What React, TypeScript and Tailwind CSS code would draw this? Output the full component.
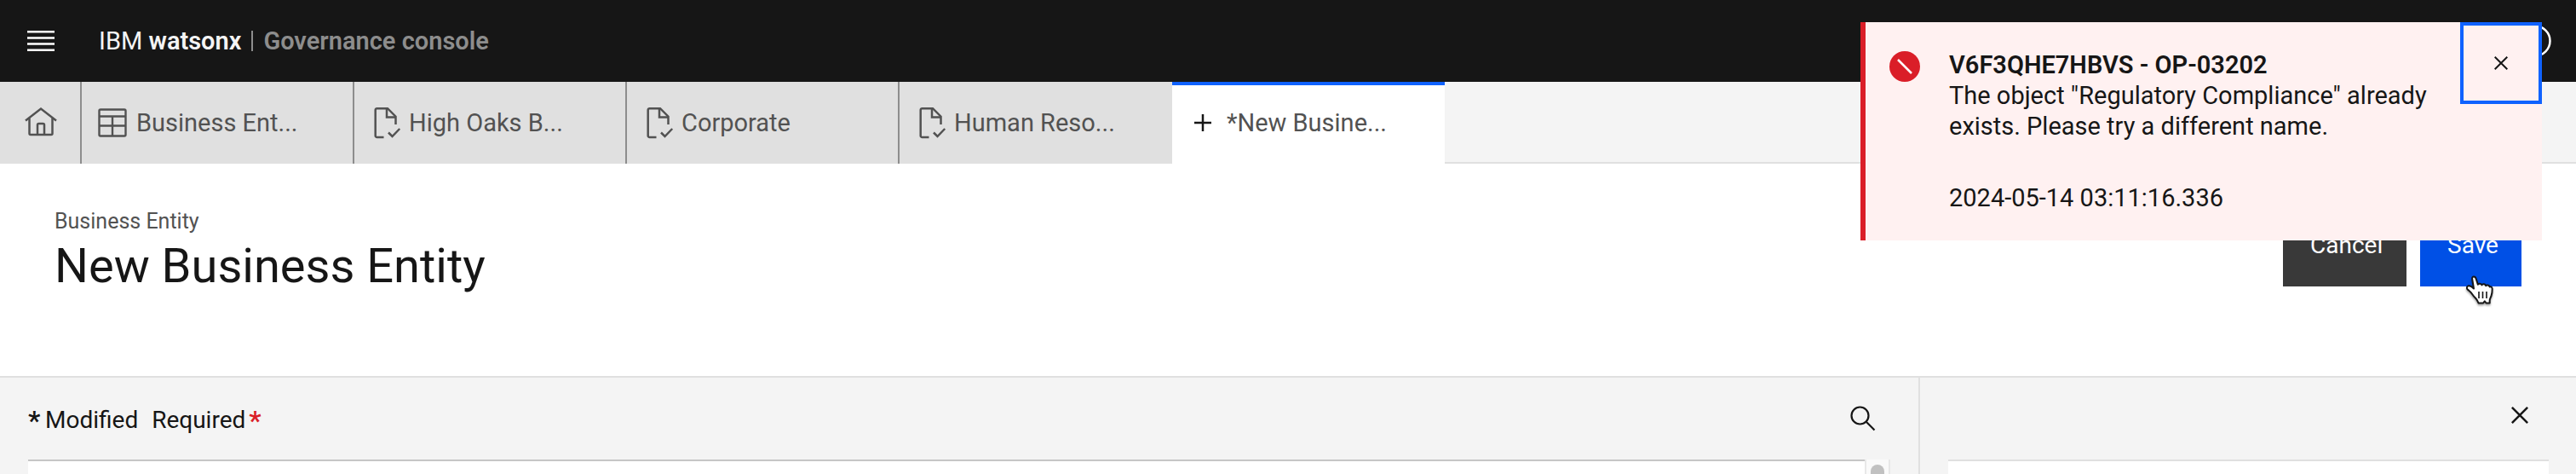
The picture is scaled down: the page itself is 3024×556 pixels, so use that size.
import type { ReactNode } from "react";

const TableIcon = () => (
  <svg viewBox="0 0 40 40" className="size-10 shrink-0" fill="none" stroke="currentColor" strokeWidth="2.4" aria-hidden="true">
    <rect x="4.5" y="4.5" width="31" height="31" rx="1.5" />
    <path d="M4.5 12.5h31M4.5 23.5h31M20 12.5v23" />
  </svg>
);

const DocumentCheckIcon = () => (
  <svg viewBox="0 0 40 40" className="size-10 shrink-0" fill="none" stroke="currentColor" strokeWidth="2.5" aria-hidden="true">
    <path d="M18.5 37H10.5a1.8 1.8 0 0 1-1.8-1.8V5a1.8 1.8 0 0 1 1.8-1.8H23l9.5 9.5V22" />
    <path d="M22 3.5V13.5H32" />
    <path d="M24 31.5l4.5 4.5 8.7-9" />
  </svg>
);

const PlusIcon = () => (
  <svg viewBox="0 0 40 40" className="size-10 shrink-0 text-[#161616]" fill="none" stroke="currentColor" strokeWidth="2.5" aria-hidden="true">
    <path d="M20 10v20M10 20h20" />
  </svg>
);

const HomeIcon = () => (
  <svg viewBox="0 0 40 40" className="size-10" fill="none" stroke="currentColor" strokeWidth="2.5" aria-hidden="true">
    <path d="M2 17.5L20 3.5l18 14" />
    <path d="M6.500 14.5V32.5a1.5 1.5 0 0 0 1.5 1.5h24a1.5 1.5 0 0 0 1.5-1.5V14.5" />
    <path d="M16 34V22.5a1.5 1.5 0 0 1 1.5-1.5h5a1.5 1.5 0 0 1 1.5 1.5V34" />
  </svg>
);

const CloseIcon = ({ className }: { className: string }) => (
  <svg viewBox="0 0 16 16" className={className} fill="none" stroke="currentColor" aria-hidden="true">
    <path d="M.7.7l14.6 14.6M15.3.7L.7 15.3" />
  </svg>
);

const PointerIcon = () => (
  <svg viewBox="0 0 34 38" className="h-[38px] w-[34px] drop-shadow-[0_2px_1px_rgba(0,0,0,0.35)]" fill="#fff" stroke="#161616" strokeWidth="2" strokeLinejoin="round" aria-hidden="true">
    <path d="M8.2 4.5c-.5-2 .6-3 1.8-3s2.200.8 2.600 2.300l2.200 7c.6-1.500 4-1.700 4.700.6.900-1.700 4.200-1.400 4.700.9 1-1.500 4-1 4.500 1.200 1.600-.6 3 .5 3 2.500 0 3-.2 5.500-1.200 8.200-.9 2.400-1.800 3.500-1.800 5.300v3h-4.200l-1.600-2.300-1.800 2.300h-5.500c-.8-1.500-1.500-3.800-3.500-5.700-2.200-2-3.500-4-5-6.200-1.300-2-3.700-3.200-4.700-4.500-1-1.400-.5-3.500 1.500-3.800 2.200-.3 4 1 6.100 3.200z" />
    <path d="M16 19v8M20.500 19v8M25 19v8" fill="none" strokeWidth="1.6" />
  </svg>
);

const tabs: { label: string; icon: ReactNode }[] = [
  { label: "Business Ent...", icon: <TableIcon /> },
  { label: "High Oaks B...", icon: <DocumentCheckIcon /> },
  { label: "Corporate", icon: <DocumentCheckIcon /> },
  { label: "Human Reso...", icon: <DocumentCheckIcon /> },
];

export default function App() {
  return (
    <div className="relative flex min-h-screen flex-col bg-white font-['Roboto',sans-serif] text-[28px] leading-9 text-[#161616]">
      <header className="flex h-24 items-center bg-[#161616] pr-7 text-white">
        <button type="button" aria-label="Open menu" className="flex h-24 w-24 items-center justify-center">
          <svg viewBox="0 0 32 24" className="h-6 w-8" fill="currentColor" aria-hidden="true">
            <path d="M0 0h32v2.500H0zM0 7.200h32v2.500H0zM0 14.300h32v2.500H0zM0 21.500h32v2.500H0z" />
          </svg>
        </button>
        <a href="#home" className="flex items-center gap-3 pl-5 text-[29px]">
          <span className="text-[#f4f4f4]">
            IBM <span className="font-semibold">watsonx</span>
          </span>
          <span className="h-6 w-0.5 bg-[#8d8d8d]" />
          <span className="font-semibold text-[#8d8d8d]">Governance console</span>
        </a>
        <button type="button" aria-label="Help" className="ml-auto">
          <svg viewBox="0 0 40 40" className="size-10" fill="none" stroke="currentColor" strokeWidth="2.500" aria-hidden="true">
            <circle cx="20" cy="20" r="17.500" />
          </svg>
        </button>
      </header>

      <nav className="flex h-24 bg-[#f4f4f4] text-[29px] text-[#525252] shadow-[inset_0_-2px_0_#e0e0e0]">
        <button type="button" aria-label="Home" className="flex w-24 items-center justify-center border-r-2 border-[#8d8d8d] bg-[#e0e0e0] pl-0.5">
          <HomeIcon />
        </button>
        {tabs.map((tab, i) => (
          <button
            key={tab.label}
            type="button"
            className={
              i < tabs.length - 1
                ? "flex w-80 items-center gap-2 border-r-2 border-[#8d8d8d] bg-[#e0e0e0] pl-4"
                : "flex w-80 items-center gap-2 bg-[#e0e0e0] pl-4"
            }
          >
            {tab.icon}
            <span>{tab.label}</span>
          </button>
        ))}
        <button type="button" aria-current="page" className="flex w-80 items-center gap-2 bg-white pl-4 shadow-[inset_0_4px_0_#0f62fe]">
          <PlusIcon />
          <span>*New Busine...</span>
        </button>
      </nav>

      <section className="flex items-start justify-between border-b-2 border-[#e0e0e0] pt-12 pr-16 pb-[97px] pl-16">
        <div className="pt-1">
          <p className="text-[25px] leading-8 text-[#525252]">Business Entity</p>
          <h1 className="mt-1 text-[56px] leading-[64px]">New Business Entity</h1>
        </div>
        <div className="flex gap-4 text-white">
          <button type="button" className="h-24 w-[145px] bg-[#393939] pl-8 text-left">
            Cancel
          </button>
          <button type="button" className="relative h-24 w-[119px] bg-[#0050e6] pl-8 text-left">
            Save
            <span className="absolute top-[83px] left-[53px]">
              <PointerIcon />
            </span>
          </button>
        </div>
      </section>

      <main className="flex flex-1 bg-[#f4f4f4]">
        <section className="flex flex-1 flex-col px-[33px]">
          <div className="flex h-24 items-center pr-4">
            <p className="flex items-center pt-1">
              <span className="w-5 text-[32px] font-semibold">*</span>
              <span>Modified</span>
              <span className="ml-4">Required</span>
              <span className="ml-1 text-[32px] font-semibold text-[#da1e28]">*</span>
            </p>
            <button type="button" aria-label="Search" className="ml-auto">
              <svg viewBox="0 0 32 32" className="size-8" fill="none" stroke="currentColor" strokeWidth="2.200" aria-hidden="true">
                <circle cx="12.500" cy="12.500" r="10" />
                <path d="M19.800 19.800L29.500 29.500" />
              </svg>
            </button>
          </div>
          <div className="flex flex-1">
            <div className="flex-1 border-t-2 border-[#c6c6c6] bg-white" />
            <div className="w-[30px] border-x-2 border-[#e8e8e8] bg-[#fafafa] px-[5px] pt-1.5">
              <div className="h-full rounded-t-full bg-[#c1c1c1]" />
            </div>
          </div>
        </section>
        <aside className="flex w-[772px] flex-col border-l-2 border-[#e0e0e0] pr-8 pl-[33px]">
          <div className="flex h-24 items-center justify-end pr-6 pb-2">
            <button type="button" aria-label="Close panel">
              <CloseIcon className="size-5 stroke-2" />
            </button>
          </div>
          <div className="flex-1 border-t-2 border-[#e0e0e0] bg-white" />
        </aside>
      </main>

      <div role="alert" className="absolute top-[26px] right-10 flex h-64 w-[800px] items-start border-l-[6px] border-[#da1e28] bg-[#fff1f1]">
        <svg viewBox="0 0 36 36" className="mt-[34px] ml-7 size-9 shrink-0" aria-hidden="true">
          <circle cx="18" cy="18" r="18" fill="#da1e28" />
          <path d="M10 10l16 16" stroke="#fff" strokeWidth="2.500" />
        </svg>
        <div className="ml-[34px] flex-1 pt-8 text-[29px]">
          <h2 className="font-semibold">V6F3QHE7HBVS - OP-03202</h2>
          <p>
            The object "Regulatory Compliance" already
            <br />
            exists. Please try a different name.
          </p>
          <p className="mt-12">2024-05-14 03:11:16.336</p>
        </div>
        <button type="button" aria-label="Close notification" className="flex size-24 shrink-0 items-center justify-center border-4 border-[#0f62fe]">
          <CloseIcon className="size-4 stroke-2" />
        </button>
      </div>
    </div>
  );
}
